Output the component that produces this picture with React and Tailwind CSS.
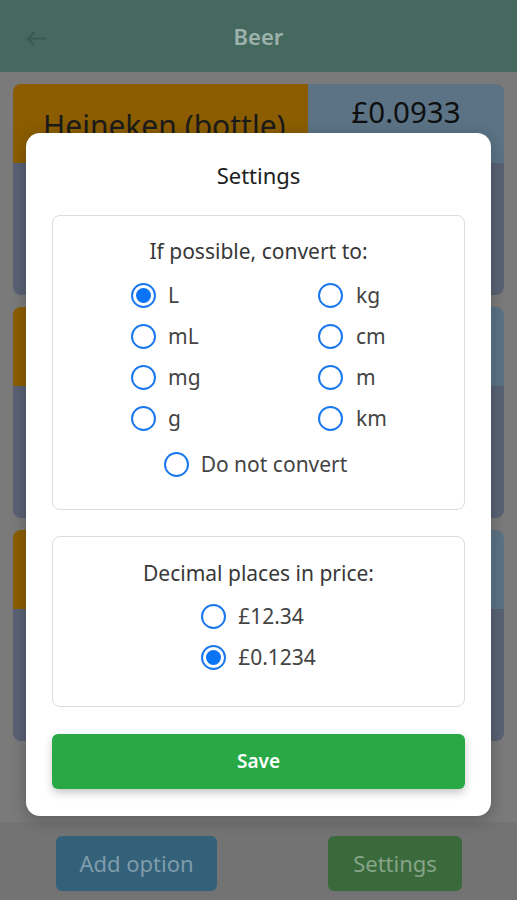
import React from "react";

const FONT = { fontFamily: '"Noto Sans", "Open Sans", sans-serif' };

function Radio({ checked }) {
  return (
    <span className="flex h-[25px] w-[25px] shrink-0 items-center justify-center rounded-full border-[2.5px] border-[#1a78ee] bg-white">
      {checked && <span className="h-[15px] w-[15px] rounded-full bg-[#0a74f5]" />}
    </span>
  );
}

function Option({ label, checked, gap = "gap-[12px]" }) {
  return (
    <div className={`flex h-[41px] items-center ${gap}`}>
      <Radio checked={checked} />
      <span className="text-[21px] text-[#444]">{label}</span>
    </div>
  );
}

function Card({ title, price }) {
  return (
    <div className="flex h-[211px] flex-col overflow-hidden rounded-[8px]">
      <div className="flex h-[79px]">
        <div className="flex flex-1 items-center bg-[#8b5d00] pl-[30px]">
          <span className="mt-[3px] text-[30px] text-[#1b1b1b]">{title}</span>
        </div>
        <div className="flex w-[196px] justify-center bg-[#5b7385] pt-[8px]">
          <span className="text-[29.5px] leading-[40px] text-[#0f0f0f]">{price}</span>
        </div>
      </div>
      <div className="flex-1 bg-[#596274]" />
    </div>
  );
}

export default function App() {
  return (
    <div className="relative h-[900px] w-[517px] overflow-hidden bg-[#7a7a7a]" style={FONT}>
      <div className="flex h-full flex-col">
        <div className="relative flex h-[72px] shrink-0 items-center justify-center bg-[#46695f]">
          <svg className="absolute left-[25px] top-[27px]" width="23" height="23" viewBox="0 0 24 24" fill="none" stroke="#375b51" strokeWidth="2.2" strokeLinecap="round" strokeLinejoin="round">
            <path d="M21 12H3" />
            <path d="M9 6l-6 6 6 6" />
          </svg>
          <span className="text-[22px] font-semibold text-[#9db2ac]">Beer</span>
        </div>
        <div className="flex flex-1 flex-col gap-[12px] px-[13px] pt-[12px]">
          <Card title="Heineken (bottle)" price="£0.0933" />
          <Card title="" price="" />
          <Card title="" price="" />
        </div>
        <div className="flex h-[78px] shrink-0 items-start bg-[#737373] pl-[56px] pr-[55px] pt-[14px]">
          <div className="flex h-[55px] w-[161px] items-center justify-center rounded-[6px] bg-[#34617a] text-[22px] text-[#7f9caa]">
            Add option
          </div>
          <div className="flex-1" />
          <div className="flex h-[55px] w-[134px] items-center justify-center rounded-[6px] bg-[#3a6a3c] text-[22px] text-[#86a487]">
            Settings
          </div>
        </div>
      </div>

      <div className="absolute left-[26px] top-[133px] flex w-[465px] flex-col rounded-[14px] bg-white px-[26px] pb-[27px] pt-[28px] shadow-[0_4px_16px_rgba(0,0,0,0.25)]">
        <div className="mb-[26px] text-center text-[22px] leading-[28px] text-[#202020]">Settings</div>

        <div className="flex flex-col rounded-[8px] border border-[#dcdcdc] pb-[24px] pt-[21px]">
          <div className="text-center text-[21px] leading-[28px] text-[#383838]">If possible, convert to:</div>
          <div className="ml-[78px] mt-[10px] grid grid-cols-[187px_auto]">
            <Option label="L" checked />
            <Option label="kg" gap="gap-[13px]" />
            <Option label="mL" />
            <Option label="cm" gap="gap-[13px]" />
            <Option label="mg" />
            <Option label="m" gap="gap-[13px]" />
            <Option label="g" />
            <Option label="km" gap="gap-[13px]" />
          </div>
          <div className="mt-[5px] flex justify-center pr-[6px]">
            <Option label="Do not convert" />
          </div>
        </div>

        <div className="mt-[26px] flex flex-col items-center rounded-[8px] border border-[#dcdcdc] pb-[28px] pt-[22px]">
          <div className="text-center text-[21px] leading-[28px] text-[#383838]">Decimal places in price:</div>
          <div className="mt-[9px] flex flex-col items-start">
            <Option label="£12.34" />
            <Option label="£0.1234" checked />
          </div>
        </div>

        <div className="mt-[27px] flex h-[55px] items-center justify-center rounded-[6px] bg-[#28a946] text-[19px] font-semibold text-white shadow-[0_4px_8px_rgba(0,0,0,0.22)]">
          Save
        </div>
      </div>
    </div>
  );
}
